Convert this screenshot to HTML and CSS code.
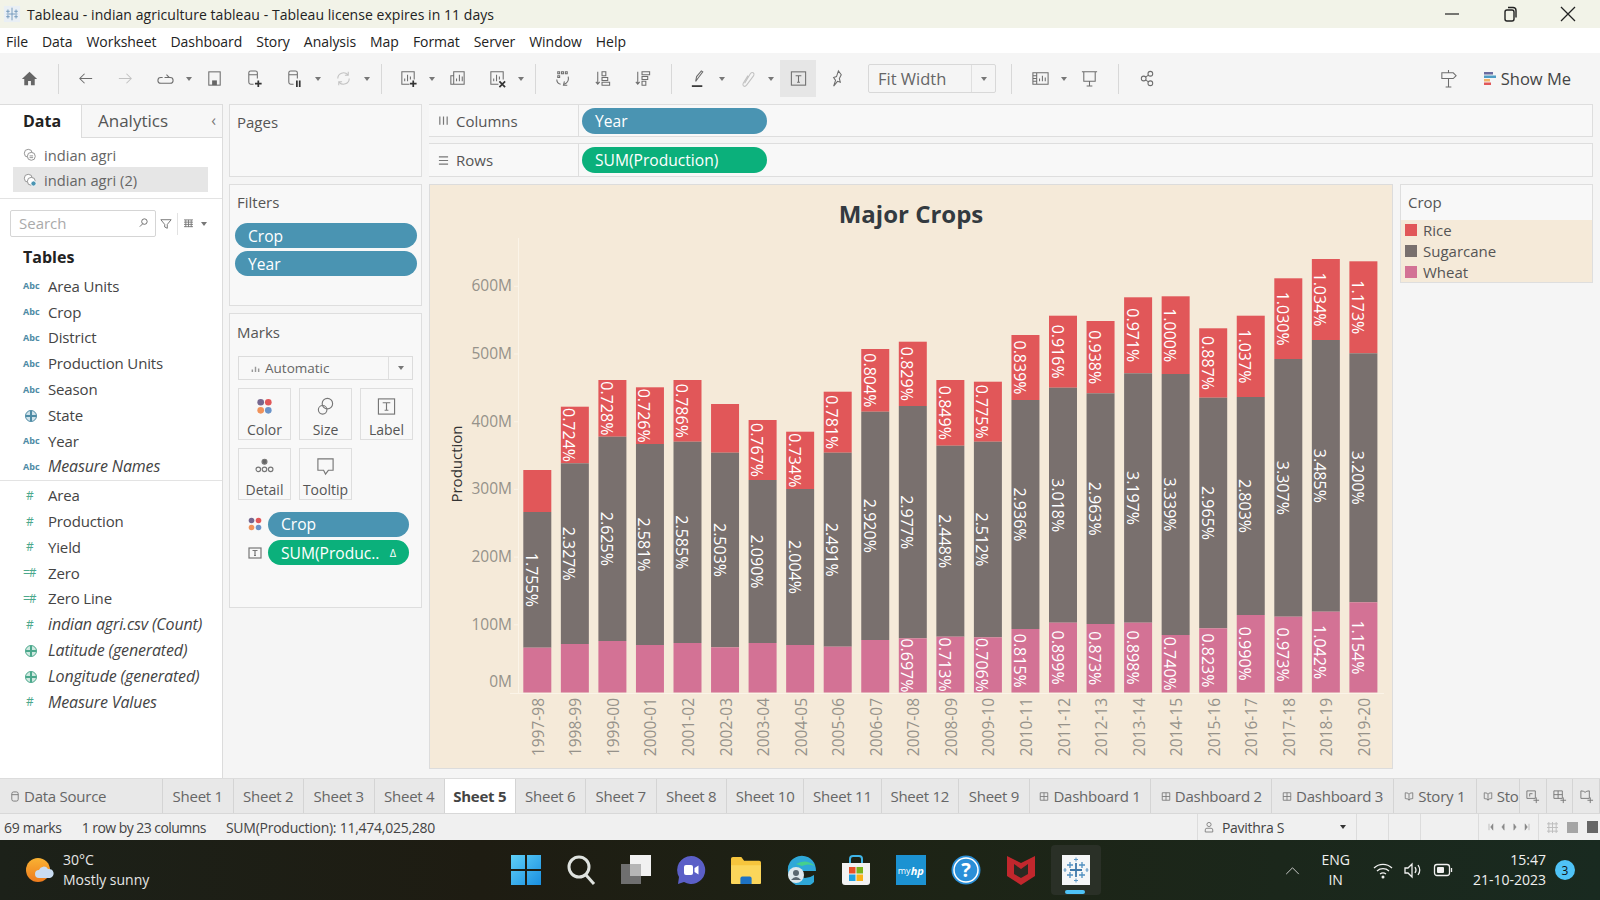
FILE: index.html
```html
<!DOCTYPE html>
<html lang="en">
<head>
  <meta charset="UTF-8">
  <title>Tableau - indian agriculture tableau</title>
  <link rel="stylesheet" href="styles.css">
</head>
<body>
  <div class="titlebar">
    <svg class="app-logo" viewBox="0 0 20 20"><rect x="1" y="1" width="18" height="18" fill="#e9eff5"/><path d="M10 3v14M4 10h12M5.500 5v4M3.500 7h4M14.500 5v4M12.500 7h4M5.500 11v4M3.500 13h4M14.500 11v4M12.500 13h4" stroke="#6d95ba" stroke-width="1"/></svg>
    <span class="window-title">Tableau - indian agriculture tableau - Tableau license expires in 11 days</span>
    <div class="window-btns">
      <svg viewBox="0 0 20 20"><path d="M3 10h14" stroke="#222" stroke-width="1.2"/></svg>
      <svg viewBox="0 0 20 20" fill="none" stroke="#222" stroke-width="1.4"><rect x="5" y="6" width="9" height="11" rx="2"/><path d="M8 3.500h5a3 3 0 0 1 3 3v7"/></svg>
      <svg viewBox="0 0 20 20"><path d="M3 3l14 14M17 3L3 17" stroke="#222" stroke-width="1.3"/></svg>
    </div>
  </div>

  <div class="menubar">
    <span>File</span><span>Data</span><span>Worksheet</span><span>Dashboard</span><span>Story</span><span>Analysis</span><span>Map</span><span>Format</span><span>Server</span><span>Window</span><span>Help</span>
  </div>

  <div class="toolbar">
    <span class="tool"><svg viewBox="0 0 20 20"><path class="solid" d="M10 3l8 7.500h-2.500V17h-4v-4.500h-3V17h-4v-6.500H2z"/></svg></span>
    <i class="sep"></i>
    <span class="tool"><svg viewBox="0 0 20 20"><path d="M17 10H4M9 5l-5 5 5 5"/></svg></span>
    <span class="tool faint"><svg viewBox="0 0 20 20"><path d="M3 10h13M11 5l5 5-5 5"/></svg></span>
    <span class="tool"><svg viewBox="0 0 20 20"><path d="M7 9H5a2.500 2.500 0 0 0 0 6h10a2.500 2.500 0 0 0 0-6h-6M11 6l3 3-3 0" /></svg></span><b class="caret"></b>
    <span class="tool"><svg viewBox="0 0 20 20"><rect x="4" y="3" width="12" height="14"/><rect class="solid" x="7.500" y="12" width="5" height="5"/></svg></span>
    <span class="tool"><svg viewBox="0 0 20 20"><path d="M9 16H6q-2 0-2-2V4q0-2 2-2h5q2 0 2 2v6M4 6h9"/><path class="dark" d="M14 12v7M10.500 15.500h7"/></svg></span>
    <span class="tool"><svg viewBox="0 0 20 20"><path d="M9 16H6q-2 0-2-2V4q0-2 2-2h5q2 0 2 2v6M4 6h9"/><path class="dark" d="M12.500 12v7M15.500 12v7"/></svg></span><b class="caret"></b>
    <span class="tool faint"><svg viewBox="0 0 20 20"><path d="M16 10a6 6 0 0 1-10.500 4M4 10a6 6 0 0 1 10.500-4M15 3v3.500h-3.500M5 17v-3.500h3.500"/></svg></span><b class="caret"></b>
    <i class="sep"></i>
    <span class="tool"><svg viewBox="0 0 20 20"><path d="M11 16H3V3h13v8M6 13v-3M9 13V6M12 11V8"/><path class="dark" d="M15 12v7M11.500 15.500h7"/></svg></span><b class="caret"></b>
    <span class="tool"><svg viewBox="0 0 20 20"><path d="M6 16H3V7h3M6 3h11v13H6zM9 13v-3M12 13V6M15 13V8"/></svg></span>
    <span class="tool"><svg viewBox="0 0 20 20"><path d="M11 16H3V3h13v8M6 13v-3M9 13V6M12 11V8"/><path class="dark" d="M12 13l6 6M18 13l-6 6"/></svg></span><b class="caret"></b>
    <i class="sep"></i>
    <span class="tool"><svg viewBox="0 0 20 20"><path d="M5 3h2v2H5zM9 3h2v2H9zM13 3h2v2h-2zM5 7h2v2H5zM16 8a7 7 0 0 1-4 8M12 13l-1 4 4 0M4 11q0 4 4 5"/></svg></span>
    <span class="tool"><svg viewBox="0 0 20 20"><path d="M5 3v13M3 13.500l2 2.500 2-2.500M9.500 3h4v4h-4zM9.500 9h6v3h-6zM9.500 14h8v3h-8z"/></svg></span>
    <span class="tool"><svg viewBox="0 0 20 20"><path d="M5 3v13M3 13.500l2 2.500 2-2.500M9.500 3h8v3h-8zM9.500 8h6v3h-6zM9.500 13h4v4h-4z"/></svg></span>
    <i class="sep"></i>
    <span class="tool"><svg viewBox="0 0 20 20"><path d="M7 13l1-5 5-6 1.500 1-4.500 6z"/><path class="dark" d="M3 18h11"/></svg></span><b class="caret"></b>
    <span class="tool faint"><svg viewBox="0 0 20 20"><path d="M7 15l6-10q1.500-2 3-1t.5 3L9 17q-1.500 2-3 1t-.5-3l5-8"/></svg></span><b class="caret"></b>
    <span class="tool tool-on"><svg viewBox="0 0 20 20"><rect x="2.500" y="3" width="15" height="14"/><path d="M7 7h6M10 7v7M8.500 14h3"/></svg></span>
    <span class="tool"><svg viewBox="0 0 20 20"><path d="M12 2l-2 6-3 1 2 3-2 6 4-5 3 1-1-4 2-4z"/></svg></span>
    <div class="fit-select"><span>Fit Width</span><span class="select-btn"><b class="caret"></b></span></div>
    <i class="sep sep-fit"></i>
    <span class="tool"><svg viewBox="0 0 20 20"><path d="M2 4h16v12H2zM2 7h4M2 10h4M2 13h4M6 4v12M9 13v-3M12 13V7M15 13V9"/></svg></span><b class="caret"></b>
    <span class="tool"><svg viewBox="0 0 20 20"><path d="M2 3h16M4 3v10h12V3M10 13v5M7 18h6"/></svg></span>
    <i class="sep sep-share"></i>
    <span class="tool"><svg viewBox="0 0 20 20"><circle cx="6" cy="10" r="2.500"/><circle cx="13" cy="5" r="2.500"/><circle cx="13" cy="15" r="2.500"/><path d="M8 8.500l3-2M8 11.500l3 2"/></svg></span>
    <div class="toolbar-right">
      <span class="tool"><svg viewBox="0 0 20 20"><path d="M3 4h12l3 3-3 3H3zM10 1v3M10 10v9M7 19h6"/></svg></span>
      <span class="show-me">
        <svg viewBox="0 0 12 16"><rect y="1" width="9" height="2.500" fill="#6b6b9f"/><rect y="4.500" width="12" height="2.500" fill="#4e9cc4"/><rect y="8" width="6" height="2.500" fill="#f2b36a"/><rect y="11.500" width="7" height="2.500" fill="#e15759"/></svg>
        Show Me
      </span>
    </div>
  </div>

  <div class="workspace">
    <aside class="data-pane">
      <div class="pane-tabs">
        <span class="pane-tab pane-tab-on">Data</span>
        <span class="pane-tab">Analytics</span>
        <span class="collapse">&#8249;</span>
      </div>
      <div class="sources">
        <div class="source"><svg viewBox="0 0 16 16"><circle cx="6" cy="6" r="4.500"/><circle cx="9.500" cy="9.500" r="4.500"/><path d="M7.500 9h4M7.500 11h4"/></svg>indian agri</div>
        <div class="source source-on"><svg viewBox="0 0 16 16"><circle cx="6" cy="6" r="4.500"/><circle cx="9.500" cy="9.500" r="4.500"/><circle class="source-check" cx="12" cy="12" r="3"/></svg>indian agri (2)</div>
      </div>
      <div class="search-row">
        <div class="search">
          <span>Search</span>
          <svg viewBox="0 0 12 12"><circle cx="7" cy="5" r="3"/><path d="M5 7.500L2 10.500"/></svg>
        </div>
        <svg class="filter-ico" viewBox="0 0 14 14"><path d="M1 2h12L8.500 7.500V12l-3-1.500v-3z"/></svg>
        <i class="mini-sep"></i>
        <svg class="grid-ico" viewBox="0 0 12 10"><path d="M1 1h10M1 3.500h10M1 6h10M1 8.500h10M3 1v8M6 1v8M9 1v8"/></svg>
        <b class="caret"></b>
      </div>
      <h3 class="tables">Tables</h3>
      <ul class="fields">
        <li><i class="abc">Abc</i>Area Units</li>
        <li><i class="abc">Abc</i>Crop</li>
        <li><i class="abc">Abc</i>District</li>
        <li><i class="abc">Abc</i>Production Units</li>
        <li><i class="abc">Abc</i>Season</li>
        <li><i class="globe dim"></i>State</li>
        <li><i class="abc">Abc</i>Year</li>
        <li class="calc"><i class="abc">Abc</i>Measure Names</li>
      </ul>
      <ul class="fields measures">
        <li><i class="num">#</i>Area</li>
        <li><i class="num">#</i>Production</li>
        <li><i class="num">#</i>Yield</li>
        <li><i class="num num-calc">=#</i>Zero</li>
        <li><i class="num num-calc">=#</i>Zero Line</li>
        <li class="calc"><i class="num">#</i>indian agri.csv (Count)</li>
        <li class="calc"><i class="globe"></i>Latitude (generated)</li>
        <li class="calc"><i class="globe"></i>Longitude (generated)</li>
        <li class="calc"><i class="num">#</i>Measure Values</li>
      </ul>
    </aside>

    <div class="cards">
      <section class="card card-pages"><h4>Pages</h4></section>
      <section class="card card-filters">
        <h4>Filters</h4>
        <div class="pill-stack">
          <div class="pill">Crop</div>
          <div class="pill">Year</div>
        </div>
      </section>
      <section class="card card-marks">
        <h4>Marks</h4>
        <div class="mark-select">
          <svg viewBox="0 0 10 10"><path d="M1.500 9V6M5 9V3M8.500 9V5"/></svg>
          <span>Automatic</span>
          <span class="select-btn"><b class="caret"></b></span>
        </div>
        <div class="mark-grid">
          <div class="mark-btn">
            <svg viewBox="0 0 20 20"><circle cx="6" cy="5.500" r="3.500" fill="#76678f"/><circle cx="14" cy="5.500" r="3.500" fill="#e15759"/><circle cx="6" cy="14" r="3.500" fill="#f0925a"/><circle cx="14" cy="14" r="3.500" fill="#6a93c8"/></svg>
            Color
          </div>
          <div class="mark-btn">
            <svg class="line-ico" viewBox="0 0 20 20"><circle cx="12" cy="7" r="5.500"/><circle cx="7" cy="13.500" r="4.500"/></svg>
            Size
          </div>
          <div class="mark-btn">
            <svg class="line-ico" viewBox="0 0 20 20"><rect x="1.500" y="2" width="17" height="16"/><path d="M6 6h8M10 6v8M8 14h4"/></svg>
            Label
          </div>
          <div class="mark-btn">
            <svg class="line-ico" viewBox="0 0 20 20"><circle class="dot" cx="10" cy="5" r="2.600"/><circle cx="3.500" cy="13" r="2.400"/><circle cx="10" cy="13" r="2.400"/><circle cx="16.500" cy="13" r="2.400"/></svg>
            Detail
          </div>
          <div class="mark-btn">
            <svg class="line-ico" viewBox="0 0 20 20"><path d="M2 2h16v12h-5l-3 4-2-4H2z"/></svg>
            Tooltip
          </div>
        </div>
        <div class="mark-row">
          <svg viewBox="0 0 14 14"><circle cx="3.500" cy="3.500" r="2.800" fill="#76678f"/><circle cx="10.500" cy="3.500" r="2.800" fill="#e15759"/><circle cx="3.500" cy="10.500" r="2.800" fill="#f0925a"/><circle cx="10.500" cy="10.500" r="2.800" fill="#6a93c8"/></svg>
          <div class="pill">Crop</div>
        </div>
        <div class="mark-row">
          <svg class="line-ico" viewBox="0 0 14 14"><rect x="1" y="2" width="12" height="10"/><path d="M4.500 4.500h5M7 4.500v5M6 9.500h2"/></svg>
          <div class="pill pill-green">SUM(Produc.. <em>&#916;</em></div>
        </div>
      </section>
    </div>

    <main class="view">
      <div class="shelf">
        <div class="shelf-label"><svg viewBox="0 0 12 12"><path d="M2 1.500v9M6 1.500v9M10 1.500v9"/></svg>Columns</div>
        <div class="shelf-drop"><div class="pill pill-shelf">Year</div></div>
      </div>
      <div class="shelf shelf-rows">
        <div class="shelf-label"><svg viewBox="0 0 12 12"><path d="M1 2h10M1 6h10M1 10h10"/></svg>Rows</div>
        <div class="shelf-drop"><div class="pill pill-shelf pill-green">SUM(Production)</div></div>
      </div>
      <div class="view-row">
        <div class="chart" id="chart"></div>
        <div class="legend">
          <div class="legend-title">Crop</div>
          <div class="legend-body">
            <div class="legend-item"><i class="swatch rice"></i>Rice</div>
            <div class="legend-item"><i class="swatch sugar"></i>Sugarcane</div>
            <div class="legend-item"><i class="swatch wheat"></i>Wheat</div>
          </div>
        </div>
      </div>
    </main>
  </div>

  <nav class="tabbar">
    <div class="tab tab-source"><svg viewBox="0 0 10 12"><rect x="1.500" y="1" width="7" height="10" rx="2"/><path d="M1.500 4h7"/></svg>Data Source</div>
    <div class="tab">Sheet 1</div>
    <div class="tab">Sheet 2</div>
    <div class="tab">Sheet 3</div>
    <div class="tab">Sheet 4</div>
    <div class="tab tab-on">Sheet 5</div>
    <div class="tab">Sheet 6</div>
    <div class="tab">Sheet 7</div>
    <div class="tab">Sheet 8</div>
    <div class="tab tab-long">Sheet 10</div>
    <div class="tab tab-long">Sheet 11</div>
    <div class="tab tab-long">Sheet 12</div>
    <div class="tab tab-nine">Sheet 9</div>
    <div class="tab tab-dash"><svg viewBox="0 0 12 12"><path d="M1.500 1.500h9v9h-9zM6 1.500v9M1.500 6h9"/></svg>Dashboard 1</div>
    <div class="tab tab-dash"><svg viewBox="0 0 12 12"><path d="M1.500 1.500h9v9h-9zM6 1.500v9M1.500 6h9"/></svg>Dashboard 2</div>
    <div class="tab tab-dash"><svg viewBox="0 0 12 12"><path d="M1.500 1.500h9v9h-9zM6 1.500v9M1.500 6h9"/></svg>Dashboard 3</div>
    <div class="tab tab-story"><svg viewBox="0 0 12 12"><path d="M1.500 1.500q4.500 0 4.500 2 0-2 4.500-2v7q-4.500 0-4.500 2 0-2-4.500-2zM6 3.500v7"/></svg>Story 1</div>
    <div class="tab tab-cut"><svg viewBox="0 0 12 12"><path d="M1.500 1.500q4.500 0 4.500 2 0-2 4.500-2v7q-4.500 0-4.500 2 0-2-4.500-2zM6 3.500v7"/></svg><span>Sto</span></div>
    <div class="tab tab-add"><svg viewBox="0 0 16 16"><path d="M2 2h9v8H2zM5 8V5h3M12 9v6M9 12h6"/></svg></div>
    <div class="tab tab-add"><svg viewBox="0 0 16 16"><path d="M2 2h9v8H2zM6.500 2v8M2 6h9M12 9v6M9 12h6"/></svg></div>
    <div class="tab tab-add"><svg viewBox="0 0 16 16"><path d="M2 2q3 0 4.500 1.500Q8 2 11 2v8H2zM12 9v6M9 12h6"/></svg></div>
  </nav>

  <div class="statusbar">
    <span class="st-marks">69 marks</span>
    <span class="st-rows">1 row by 23 columns</span>
    <span class="st-sum">SUM(Production): 11,474,025,280</span>
    <div class="st-user">
      <svg viewBox="0 0 12 14"><circle cx="6" cy="4" r="2.500"/><path d="M1.500 13v-2.500q0-2 2-2h5q2 0 2 2V13z"/></svg>
      <span>Pavithra S</span>
      <b class="caret caret-dark"></b>
    </div>
    <i class="st-cell"></i>
    <i class="st-cell"></i>
    <i class="st-cell st-cell-wide"></i>
    <div class="st-nav">
      <svg viewBox="0 0 52 10"><path d="M1 1v8M6 1L3 5l3 4zM20 1l-3 4 3 4zM32 1l3 4-3 4zM46 1l3 4-3 4zM51 1v8"/></svg>
    </div>
    <div class="st-views">
      <svg class="v-small" viewBox="0 0 12 12"><path d="M0 2h12M0 6h12M0 10h12M2 0v12M6 0v12M10 0v12"/></svg>
      <i class="v-mid"></i>
      <i class="v-big"></i>
    </div>
  </div>

  <footer class="taskbar">
    <div class="weather">
      <svg viewBox="0 0 28 28"><defs><linearGradient id="sun" x1="0" y1="0" x2="0" y2="1"><stop offset="0" stop-color="#f9b233"/><stop offset="1" stop-color="#ee7b1d"/></linearGradient></defs><circle cx="12" cy="14" r="12" fill="url(#sun)"/><path d="M13 22a4 4 0 0 1 0-8 5 5 0 0 1 9-1 4.500 4.500 0 0 1 2 9z" fill="#c9dcf2"/></svg>
      <div class="weather-text"><span>30°C</span><span>Mostly sunny</span></div>
    </div>
    <div class="task-apps">
      <svg viewBox="0 0 30 30"><defs><linearGradient id="win" x1="0" y1="0" x2="1" y2="1"><stop offset="0" stop-color="#5fd0f8"/><stop offset="1" stop-color="#1a8fe0"/></linearGradient></defs><path d="M0 0h14v14H0zM16 0h14v14H16zM0 16h14v14H0zM16 16h14v14H16z" fill="url(#win)"/></svg>
      <svg viewBox="0 0 30 30" fill="none" stroke="#dfe3df" stroke-width="3"><circle cx="13" cy="12" r="10"/><path d="M20 20l8 9"/></svg>
      <svg viewBox="0 0 30 30"><rect x="0" y="9" width="20" height="20" fill="#6f6f6f"/><rect x="9" y="0" width="21" height="21" fill="#f1f1f1"/><rect x="9" y="9" width="11" height="12" fill="#b5b5b5"/></svg>
      <svg viewBox="0 0 30 30"><path d="M15 1a14 14 0 1 1-7 26l-6 2 1-7A14 14 0 0 1 15 1z" fill="#5b5fc7"/><rect x="8" y="10" width="9" height="10" rx="2" fill="#fff"/><path d="M18.500 13l4-2.500v9l-4-2.500z" fill="#fff"/></svg>
      <svg viewBox="0 0 32 30"><path d="M0 3q0-2 2-2h9l3 4h16q2 0 2 2v21q0 2-2 2H2q-2 0-2-2z" fill="#f6c53d"/><path d="M0 10h32v18q0 2-2 2H2q-2 0-2-2z" fill="#fbd65b"/><path d="M10 30v-6q0-2 2-2h8q2 0 2 2v6z" fill="#1d72c4"/></svg>
      <svg viewBox="0 0 30 30"><path d="M2 17A14 14 0 0 1 29 10q1 3 1 6H11q1 7 8 7 5 0 9-3v7a15 15 0 0 1-26-10z" fill="#2fa8d8"/><circle cx="10" cy="20" r="8" fill="#dfe7ec"/><circle cx="10" cy="18" r="3" fill="#5b6670"/><path d="M5 25q5-6 10 0z" fill="#5b6670"/><path d="M10 9Q20 3 29 11 22 8 16 11z" fill="#45cf8e"/></svg>
      <svg viewBox="0 0 30 30"><path d="M1 8h28v19q0 3-3 3H4q-3 0-3-3z" fill="#f2f2f2"/><path d="M9 8V4q0-3 3-3h6q3 0 3 3v4" fill="none" stroke="#3fb5e8" stroke-width="2"/><rect x="8" y="12" width="6.500" height="6.500" fill="#e8502a"/><rect x="15.500" y="12" width="6.500" height="6.500" fill="#7ab51d"/><rect x="8" y="19.500" width="6.500" height="6.500" fill="#1da1e2"/><rect x="15.500" y="19.500" width="6.500" height="6.500" fill="#f9b21a"/></svg>
      <div class="myhp"><span>my</span><em>hp</em></div>
      <svg viewBox="0 0 30 30"><circle cx="15" cy="15" r="14.500" fill="#2a8fd8"/><circle cx="15" cy="15" r="12" fill="none" stroke="#fff" stroke-width="1.500"/><text x="15" y="22" text-anchor="middle" class="help-mark">?</text></svg>
      <svg viewBox="0 0 28 30"><path d="M0 1l14 7 14-7v20l-14 9-14-9z" fill="#c1272d"/><path d="M7 9l7 5 7-5v10l-7 4-7-4z" fill="#2a2a22"/></svg>
      <div class="task-active">
        <svg viewBox="0 0 28 30"><rect width="28" height="30" fill="#f4f6f7"/><path d="M14 8v14M8 15h12" stroke="#3f78a8" stroke-width="1.800"/><path d="M8 7v6M5 10h6M20 7v6M17 10h6M8 17v6M5 20h6M20 17v6M17 20h6" stroke="#4f8fc0" stroke-width="1.300"/><path d="M14 2.500v4M12 4.500h4M14 23.500v4M12 25.500h4M3 13v4M1.500 15h3M25 13v4M23.500 15h3" stroke="#5c96c4" stroke-width="1"/></svg>
        <i class="active-bar"></i>
      </div>
    </div>
    <div class="tray">
      <svg class="tray-up" viewBox="0 0 16 10"><path d="M1 9l7-7 7 7"/></svg>
      <div class="lang"><span>ENG</span><span>IN</span></div>
      <svg class="tray-ico" viewBox="0 0 20 20"><path d="M1 8a13 13 0 0 1 18 0M4 11a9 9 0 0 1 12 0M7 14a5 5 0 0 1 6 0"/><circle class="tray-dot" cx="10" cy="17" r="1.500"/></svg>
      <svg class="tray-ico" viewBox="0 0 20 20"><path d="M2 8v5h3l4 4V4L5 8zM12 7q2 3 0 6M15 5q3.500 5 0 10"/></svg>
      <svg class="tray-ico" viewBox="0 0 20 20"><rect x="1.500" y="4.500" width="15" height="11" rx="2.500"/><rect class="tray-dot" x="4" y="7" width="7" height="6" rx="1"/><path d="M18.500 8v4"/></svg>
      <div class="clock"><span>15:47</span><span>21-10-2023</span></div>
      <span class="badge">3</span>
    </div>
  </footer>

  <script src="chart.js"></script>
</body>
</html>
```

FILE: styles.css
```css
* {
  box-sizing: border-box;
}

html, body {
  margin: 0;
  padding: 0;
  height: 900px;
  overflow: hidden;
}

body {
  display: flex;
  flex-direction: column;
  font-family: "Open Sans", "Liberation Sans", sans-serif;
  font-size: 15px;
  color: #555;
  background: #f5f5f5;
}

svg {
  display: block;
  flex: none;
}

/* window chrome */
.titlebar {
  height: 28px;
  background: #f2f3e8;
  display: flex;
  align-items: center;
  padding-left: 3px;
  color: #222;
}

.app-logo {
  width: 18px;
  height: 18px;
}

.window-title {
  margin-left: 6px;
  font-size: 14px;
  letter-spacing: 0.05px;
}

.window-btns {
  margin-left: auto;
  display: flex;
  gap: 38px;
  padding-right: 22px;
}

.window-btns svg {
  width: 20px;
  height: 20px;
}

.menubar {
  height: 25px;
  background: #fff;
  display: flex;
  align-items: center;
  gap: 14px;
  padding: 2px 0 0 6px;
  font-size: 14px;
  letter-spacing: -0.05px;
  color: #222;
}

/* toolbar */
.toolbar {
  height: 51px;
  display: flex;
  align-items: center;
  padding: 0 0 0 9px;
}

.tool {
  width: 40px;
  height: 37px;
  display: flex;
  align-items: center;
  justify-content: center;
}

.tool svg {
  width: 19px;
  height: 19px;
  fill: none;
  stroke: #6d6d6d;
  stroke-width: 1.1;
}

.tool svg .solid {
  fill: #666;
  stroke: none;
}

.tool svg .dark {
  stroke: #333;
  stroke-width: 1.8;
}

.tool.faint svg {
  stroke: #c2c2c2;
}

.tool-on {
  background: #e6e6e6;
  width: 36px;
  margin-left: 4px;
}

.caret {
  display: inline-block;
  width: 0;
  height: 0;
  border-left: 3px solid transparent;
  border-right: 3px solid transparent;
  border-top: 4px solid #777;
}

.toolbar .caret {
  margin: 0 2px 0 1px;
}

.sep {
  width: 1px;
  height: 30px;
  background: #d8d8d8;
  margin: 0 6px 0 9px;
}

.select-btn {
  height: 100%;
  width: 24px;
  margin-left: auto;
  display: flex;
  align-items: center;
  justify-content: center;
  border-left: 1px solid #dfdfdf;
}

.toolbar .select-btn .caret {
  margin: 0;
}

.fit-select {
  width: 128px;
  height: 29px;
  margin-left: 12px;
  background: #f5f5f5;
  border: 1px solid #d8d8d8;
  border-radius: 2px;
  display: flex;
  align-items: center;
  padding-left: 9px;
  font-size: 16.500px;
  color: #666;
}

.sep-fit {
  margin-left: 15px;
  margin-right: 8px;
}

.sep-share {
  margin-right: 8px;
}

.toolbar-right {
  margin-left: auto;
  display: flex;
  align-items: center;
  padding-right: 29px;
}

.show-me {
  display: flex;
  align-items: center;
  gap: 5px;
  margin-left: 15px;
  font-size: 16.500px;
  color: #444;
}

.show-me svg {
  width: 12px;
  height: 16px;
}

/* main area */
.workspace {
  flex: 1;
  display: flex;
  min-height: 0;
}

.data-pane {
  width: 223px;
  background: #fff;
  border-right: 1px solid #dcdcdc;
  border-top: 1px solid #dcdcdc;
}

.pane-tabs {
  height: 33px;
  display: flex;
  align-items: center;
  position: relative;
}

.pane-tab {
  height: 100%;
  display: flex;
  align-items: center;
  font-size: 17px;
  color: #555;
  flex: 1;
  padding: 0 0 2px 16px;
  background: #f7f7f7;
  border-bottom: 1px solid #dcdcdc;
}

.pane-tab-on {
  flex: none;
  width: 82px;
  padding-left: 23px;
  font-size: 16px;
  background: #fff;
  font-weight: 700;
  color: #222;
  border-bottom: 0;
  border-right: 1px solid #dcdcdc;
}

.collapse {
  position: absolute;
  right: 6px;
  top: 4px;
  font-size: 16px;
  color: #777;
}

.sources {
  padding: 4px 14px 6px 13px;
  border-bottom: 1px solid #e3e3e3;
}

.source {
  height: 25px;
  display: flex;
  align-items: center;
  gap: 7px;
  padding-left: 10px;
  font-size: 14.700px;
  color: #666;
}

.source svg {
  width: 14px;
  height: 14px;
  fill: #fff;
  stroke: #888;
  stroke-width: 1;
}

.source .source-check {
  fill: #4a94b2;
  stroke: #fff;
}

.source-on {
  background: #e6e6e6;
}

.search-row {
  display: flex;
  align-items: center;
  padding: 11px 0 0 10px;
}

.search {
  width: 146px;
  height: 27px;
  border: 1px solid #d5d5d5;
  border-radius: 2px;
  display: flex;
  align-items: center;
  justify-content: space-between;
  padding: 0 6px 2px 8px;
  font-size: 15px;
  color: #aaa;
}

.search svg {
  width: 11px;
  height: 11px;
  fill: none;
  stroke: #666;
}

.filter-ico {
  width: 12px;
  height: 12px;
  margin-left: 4px;
  fill: none;
  stroke: #666;
}

.mini-sep {
  width: 1px;
  height: 22px;
  background: #e2e2e2;
  margin: 0 5px 0 5px;
}

.grid-ico {
  width: 11px;
  height: 9px;
  fill: none;
  stroke: #777;
}

.search-row .caret {
  margin-left: 7px;
}

.tables {
  margin: 9px 0 5px 23px;
  font-size: 16px;
  line-height: 22px;
  font-weight: 700;
  color: #222;
}

.fields {
  list-style: none;
  margin: 0;
  padding: 0 0 0 18px;
}

.fields li {
  height: 25.800px;
  display: flex;
  align-items: center;
  font-size: 15px;
  color: #444;
  letter-spacing: -0.15px;
}

.fields li.calc {
  font-style: italic;
  font-size: 16px;
}

.fields i {
  width: 30px;
  flex: none;
  font-style: normal;
  padding-left: 5px;
}

.fields.measures {
  border-top: 1px solid #e3e3e3;
  margin-top: 1px;
  padding-top: 1px;
}

.abc {
  font-size: 9px;
  font-weight: 700;
  color: #4e8ba5;
  letter-spacing: 0;
}

.fields .num {
  font-size: 12px;
  color: #4ba88c;
  padding-left: 8px;
}

.fields .num-calc {
  padding-left: 5px;
  letter-spacing: -1px;
}

.globe {
  position: relative;
  height: 10px;
}

.globe::before {
  content: "";
  display: block;
  width: 10px;
  height: 10px;
  margin-left: 2px;
  border-radius: 50%;
  border: 1px solid #4ba88c;
  background:
    linear-gradient(90deg, #0000 42%, #4ba88c 42%, #4ba88c 58%, #0000 58%),
    linear-gradient(#0000 42%, #4ba88c 42%, #4ba88c 58%, #0000 58%),
    #cfe9e0;
}

.globe.dim::before {
  border-color: #4e8ba5;
  background:
    linear-gradient(90deg, #0000 42%, #4e8ba5 42%, #4e8ba5 58%, #0000 58%),
    linear-gradient(#0000 42%, #4e8ba5 42%, #4e8ba5 58%, #0000 58%),
    #cfe2ea;
}

/* pages / filters / marks */
.cards {
  width: 193px;
  margin-left: 6px;
  display: flex;
  flex-direction: column;
  gap: 7px;
}

.card {
  background: #f8f8f8;
  border: 1px solid #dedede;
  padding: 0 7px;
}

.card h4 {
  margin: 0;
  font-size: 15px;
  font-weight: 400;
  color: #555;
  line-height: 20px;
  padding-top: 7px;
}

.card-pages {
  height: 73px;
}

.card-filters {
  height: 122px;
}

.card-marks {
  height: 295px;
}

.pill {
  height: 25px;
  border-radius: 13px;
  background: #4a94b2;
  color: #fff;
  display: flex;
  align-items: center;
  padding-left: 13px;
  font-size: 15.600px;
  white-space: nowrap;
}

.pill-green {
  background: #0bb07b;
}

.pill-stack {
  display: flex;
  flex-direction: column;
  gap: 3px;
  margin: 11px 0 0 -2px;
  width: 182px;
}

.card-marks h4 {
  padding-top: 8px;
}

.mark-select {
  height: 24px;
  margin: 14px 1px 0 1px;
  border: 1px solid #dcdcdc;
  background: #f8f8f8;
  display: flex;
  align-items: center;
  padding-left: 12px;
  font-size: 13.500px;
  color: #666;
}

.mark-select svg {
  width: 9px;
  height: 9px;
  fill: none;
  stroke: #999;
  stroke-width: 1.6;
  margin-right: 5px;
}

.mark-grid {
  display: grid;
  grid-template-columns: repeat(3, 53px);
  grid-auto-rows: 52px;
  gap: 8px;
  margin: 8px 0 0 1px;
}

.mark-btn {
  border: 1px solid #dedede;
  background: #f8f8f8;
  display: flex;
  flex-direction: column;
  align-items: center;
  justify-content: flex-end;
  gap: 4px;
  font-size: 14px;
  color: #555;
}

.mark-btn svg {
  width: 19px;
  height: 19px;
}

.line-ico {
  fill: none;
  stroke: #777;
  stroke-width: 1.2;
}

.line-ico .dot {
  fill: #666;
}

.mark-row {
  display: flex;
  align-items: center;
  gap: 6px;
  margin: 3.500px 0 0 11px;
  width: 161px;
}

.mark-grid + .mark-row {
  margin-top: 11.500px;
}

.mark-row svg {
  width: 14px;
  height: 14px;
}

.mark-row .pill {
  flex: 1;
}

.pill em {
  font-style: normal;
  font-size: 11px;
  margin-left: auto;
  padding-right: 13px;
}

/* shelves and view */
.view {
  width: 1164px;
  margin-left: 7px;
  display: flex;
  flex-direction: column;
}

.shelf {
  height: 33px;
  display: flex;
  background: #f8f8f8;
  border: 1px solid #dedede;
  border-left: 0;
}

.shelf-rows {
  height: 34px;
  margin-top: 6px;
}

.shelf-label {
  width: 150px;
  border-right: 1px solid #dedede;
  display: flex;
  align-items: center;
  gap: 7px;
  padding-left: 9px;
  font-size: 15px;
  color: #555;
}

.shelf-label svg {
  width: 11px;
  height: 11px;
  fill: none;
  stroke: #777;
  stroke-width: 1.300;
}

.shelf-drop {
  flex: 1;
  display: flex;
  align-items: center;
  padding-left: 3px;
}

.pill-shelf {
  width: 185px;
  height: 26px;
}

.view-row {
  flex: 1;
  display: flex;
  gap: 7px;
  margin-top: 7px;
  margin-bottom: 9px;
  min-height: 0;
}

.chart {
  width: 964px;
  background: #f5ead9;
  outline: 1px solid #dcdcdc;
  outline-offset: -1px;
}

.chart svg {
  width: 964px;
  height: 584px;
}

.legend {
  width: 193px;
  height: 99px;
  border: 1px solid #dedede;
  background: #f8f8f8;
}

.legend-title {
  height: 35px;
  display: flex;
  align-items: center;
  padding: 0 0 2px 7px;
  font-size: 15px;
  color: #555;
}

.legend-body {
  height: 62px;
  background: #f5ead9;
  padding-left: 4px;
}

.legend-item {
  height: 20.800px;
  display: flex;
  align-items: center;
  gap: 6px;
  font-size: 15px;
  color: #555;
}

.swatch {
  width: 12px;
  height: 12px;
}

.rice {
  background: #e15759;
}

.sugar {
  background: #79706e;
}

.wheat {
  background: #d37295;
}

.bar-label {
  font-size: 16px;
  font-weight: 500;
  fill: #fff;
  text-anchor: middle;
}

.axis-label {
  font-size: 15.500px;
  fill: #96928a;
}

.axis-title {
  font-size: 15px;
  font-weight: 500;
  fill: #333;
  text-anchor: middle;
}

.chart-title {
  font-size: 24px;
  font-weight: 700;
  fill: #333a40;
  text-anchor: middle;
}

.axis-line {
  stroke: #fbf4e8;
  stroke-width: 1;
}

/* sheet tabs */
.tabbar {
  height: 36px;
  background: #e8e8e8;
  border-top: 1px solid #dcdcdc;
  border-bottom: 1px solid #d8d8d8;
  display: flex;
}

.tab {
  width: 70.500px;
  flex: none;
  border-right: 1px solid #d4d4d4;
  display: flex;
  align-items: center;
  justify-content: center;
  gap: 4px;
  font-size: 15px;
  letter-spacing: -0.25px;
  color: #666;
  white-space: nowrap;
  overflow: hidden;
}

.tab svg {
  width: 10px;
  height: 11px;
  fill: none;
  stroke: #777;
}

.tab-source {
  width: 163px;
  justify-content: flex-start;
  padding-left: 10px;
}

.tab-on {
  background: #fff;
  font-weight: 700;
  color: #444;
}

.tab-long {
  width: 77.300px;
}

.tab-nine {
  width: 71px;
}

.tab-dash {
  width: 121.300px;
}

.tab-story {
  width: 83px;
}

.tab-cut {
  width: 43px;
  justify-content: flex-start;
  padding-left: 6px;
}

.tab-add {
  flex: 1;
  width: auto;
}

.tab-add svg {
  width: 15px;
  height: 15px;
}

/* status bar */
.statusbar {
  height: 26px;
  background: #f0f0f0;
  display: flex;
  align-items: center;
  font-size: 14px;
  letter-spacing: -0.3px;
  color: #444;
}

.st-marks {
  margin-left: 4px;
}

.st-rows {
  margin-left: 20px;
  letter-spacing: -0.55px;
}

.st-sum {
  margin-left: 20px;
  letter-spacing: -0.25px;
}

.st-user {
  margin-left: auto;
  width: 159px;
  height: 100%;
  border-left: 1px solid #dcdcdc;
  display: flex;
  align-items: center;
  padding-left: 6px;
  gap: 8px;
}

.st-user svg {
  width: 10px;
  height: 12px;
  fill: none;
  stroke: #777;
}

.st-user .caret {
  margin-left: auto;
  margin-right: 10px;
}

.caret-dark {
  border-top-color: #333;
}

.st-cell {
  width: 32px;
  height: 100%;
  border-left: 1px solid #dcdcdc;
}

.st-cell-wide {
  width: 58px;
}

.st-nav {
  width: 60px;
  height: 100%;
  border-left: 1px solid #dcdcdc;
  display: flex;
  align-items: center;
  padding-left: 7px;
}

.st-nav svg {
  width: 46px;
  height: 8px;
  fill: #888;
  stroke: #888;
  stroke-width: 0.6;
}

.st-views {
  width: 62px;
  height: 100%;
  border-left: 1px solid #dcdcdc;
  display: flex;
  align-items: center;
  gap: 9px;
  padding-left: 8px;
}

.v-small {
  width: 11px;
  height: 11px;
  fill: none;
  stroke: #bbb;
}

.v-mid {
  width: 11px;
  height: 11px;
  background: #a5a5a5;
}

.v-big {
  width: 11px;
  height: 12px;
  background: #666;
}

/* windows taskbar */
.taskbar {
  height: 60px;
  background: linear-gradient(90deg, #1c2119, #1e1c12 30%, #1d2416 60%, #192a20);
  display: flex;
  align-items: center;
  color: #f0f0f0;
}

.weather {
  display: flex;
  align-items: center;
  gap: 9px;
  margin-left: 26px;
}

.weather svg {
  width: 28px;
  height: 28px;
}

.weather-text {
  display: flex;
  flex-direction: column;
  font-size: 14px;
  line-height: 20px;
  color: #e6e6e6;
}

.task-apps {
  display: flex;
  align-items: center;
  gap: 25px;
  margin-left: 361.500px;
}

.task-apps > svg {
  width: 30px;
  height: 30px;
}

.myhp {
  width: 30px;
  height: 30px;
  background: #1c92d2;
  color: #fff;
  display: flex;
  align-items: center;
  justify-content: center;
  font-size: 9px;
}

.myhp em {
  font-weight: 700;
  font-size: 11px;
}

.help-mark {
  font-size: 20px;
  font-weight: 700;
  fill: #fff;
}

.task-active {
  width: 50px;
  height: 50px;
  margin: 0 -10px;
  background: #2a3027;
  border-radius: 4px;
  position: relative;
  display: flex;
  align-items: center;
  justify-content: center;
}

.task-active svg {
  width: 28px;
  height: 30px;
}

.active-bar {
  position: absolute;
  left: 14px;
  bottom: 1px;
  width: 20px;
  height: 4px;
  border-radius: 2px;
  background: #4fc3f7;
}

.tray {
  margin-left: auto;
  display: flex;
  align-items: center;
  padding-right: 25px;
}

.tray-up {
  width: 15px;
  height: 9px;
  fill: none;
  stroke: #ddd;
  margin-right: 21px;
}

.lang {
  display: flex;
  flex-direction: column;
  align-items: center;
  font-size: 14px;
  line-height: 20px;
  margin-right: 23px;
}

.tray-ico {
  width: 20px;
  height: 20px;
  margin-right: 10px;
  fill: none;
  stroke: #f0f0f0;
  stroke-width: 1.300;
}

.tray-ico .tray-dot {
  fill: #f0f0f0;
  stroke: none;
}

.clock {
  display: flex;
  flex-direction: column;
  align-items: flex-end;
  margin-left: 10px;
  font-size: 14px;
  line-height: 20px;
}

.badge {
  width: 20px;
  height: 20px;
  margin-left: 9px;
  border-radius: 50%;
  background: #4fc3f7;
  color: #111;
  font-size: 12px;
  display: flex;
  align-items: center;
  justify-content: center;
}
```

FILE: chart.js
```js
// tops of each stacked segment, in page pixels
const riceTop = [470,406.7,380,387.3,380,404,420,431.7,391.7,349,341.7,380,381.7,335,315.7,321,297.3,296.3,328.3,315.7,278.3,259,261.3];
const sugarTop = [512,463.3,436.7,444,441.7,452.7,480,489,452.7,411.7,406,445.7,441.7,400,387.7,393.3,373.3,374,397.7,397,359,340,353.3];
const wheatTop = [647.7,644,641,645,643,647.3,643,645,646.7,640,638.3,636.7,637.3,629,622.7,624,622.7,635,628.3,615,616.7,611.7,602.3];

const riceLabels = [null,"0.724","0.728","0.726","0.786",null,"0.767","0.734","0.781","0.804","0.829","0.849","0.775","0.839","0.916","0.938","0.971","1.000","0.887","1.037","1.030","1.034","1.173"];
const sugarLabels = ["1.755","2.327","2.625","2.581","2.585","2.503","2.090","2.004","2.491","2.920","2.977","2.448","2.512","2.936","3.018","2.963","3.197","3.339","2.965","2.803","3.307","3.485","3.200"];
const wheatLabels = [null,null,null,null,null,null,null,null,null,null,"0.697","0.713","0.706","0.815","0.899","0.873","0.898","0.740","0.823","0.990","0.973","1.042","1.154"];

const BASE = 692.5;
const BAR_W = 28;
const PITCH = 37.55;
const FIRST_X = 523.3;

function yearName(i) {
  const start = 1997 + i;
  return start + "-" + String((start + 1) % 100).padStart(2, "0");
}

function segment(x, top, bottom, color, label) {
  let out = `<rect x="${x}" y="${top}" width="${BAR_W}" height="${bottom - top}" fill="${color}"/>`;
  if (label) {
    const cx = x + 2.5;
    const cy = (top + bottom) / 2;
    out += `<text class="bar-label" transform="translate(${cx} ${cy}) rotate(90)">${label}%</text>`;
  }
  return out;
}

let svg = `<svg viewBox="429 184 964 584">`;
svg += `<text class="chart-title" x="911" y="223">Major Crops</text>`;
svg += `<text class="axis-title" transform="translate(462 464) rotate(-90)">Production</text>`;
svg += `<path class="axis-line" d="M518.500 238V693M510 693.500H1384"/>`;

["0M", "100M", "200M", "300M", "400M", "500M", "600M"].forEach((t, i) => {
  const y = i === 0 ? 682 : BASE - i * 67.7;
  svg += `<text class="axis-label" x="512" y="${y + 5}" text-anchor="end">${t}</text>`;
  if (i > 0) svg += `<path class="axis-line" d="M514 ${y}h4"/>`;
});

riceTop.forEach((top, i) => {
  const x = FIRST_X + i * PITCH;
  svg += segment(x, top, sugarTop[i], "#e15759", riceLabels[i]);
  svg += segment(x, sugarTop[i], wheatTop[i], "#79706e", sugarLabels[i]);
  svg += segment(x, wheatTop[i], BASE, "#d37295", wheatLabels[i]);
  svg += `<text class="axis-label" text-anchor="end" transform="translate(${x + 20.5} 698) rotate(-90)">${yearName(i)}</text>`;
});

svg += `</svg>`;
document.getElementById("chart").innerHTML = svg;
```
